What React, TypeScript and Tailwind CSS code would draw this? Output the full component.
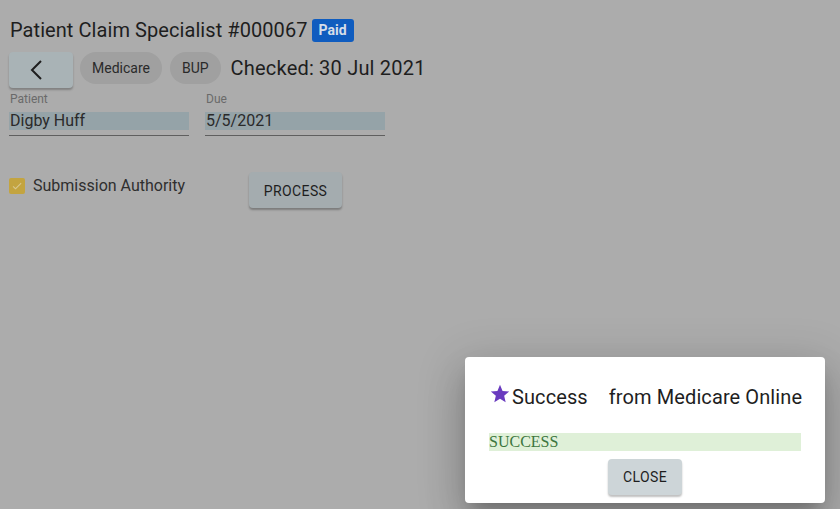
import React from 'react';

const font = { fontFamily: 'Roboto, "Noto Sans", sans-serif' };

function ChevronLeft() {
  return (
    <svg width="14" height="22" viewBox="0 0 14 22" className="text-[#1e1e1e] -ml-[10px]">
      <path d="M12 2 3 11l9 9" fill="none" stroke="currentColor" strokeWidth="2" />
    </svg>
  );
}

function Star() {
  return (
    <svg width="22" height="22" viewBox="0 0 24 24" className="text-[#6a3bbf] -mt-[6px] shrink-0">
      <path d="M12 17.27 18.18 21l-1.64-7.03L22 9.24l-7.19-.61L12 2 9.19 8.63 2 9.24l5.46 4.73L5.82 21z" fill="currentColor" />
    </svg>
  );
}

export default function App() {
  return (
    <div className="relative w-[840px] h-[509px] overflow-hidden bg-[#acacac] text-[#1f1f1f]" style={font}>
      <div className="px-[9px] pt-[16px]">
        <div className="flex items-center gap-[4px] h-[28px]">
          <h1 className="text-[20px] leading-[28px] pl-[1px] tracking-[0.07px] text-[#1e1e1e]">Patient Claim Specialist #000067</h1>
          <span className="h-[23px] px-[7px] rounded-[3px] bg-[#0f5cbf] text-[#d6dde8] text-[14px] font-bold leading-[23px]">Paid</span>
        </div>
        <div className="flex items-center mt-[8px] h-[36px]">
          <button className="w-[64px] h-[36px] rounded-[4px] bg-[#a9b3b6] shadow-[0_2px_2px_rgba(0,0,0,0.25)] flex items-center justify-center">
            <ChevronLeft />
          </button>
          <span className="ml-[7px] h-[32px] px-[12px] rounded-full bg-[#a0a0a0] text-[14px] leading-[32px] text-[#2a2a2a] -mt-[4px]">Medicare</span>
          <span className="ml-[8px] h-[32px] px-[12px] rounded-full bg-[#a0a0a0] text-[14px] leading-[32px] text-[#2a2a2a] -mt-[4px]">BUP</span>
          <span className="ml-[10px] text-[20px] leading-[28px] tracking-[0.2px] text-[#1e1e1e] -mt-[4px]">Checked: 30 Jul 2021</span>
        </div>
        <div className="flex gap-[16px] mt-[3px]">
          {[
            ['Patient', 'Digby Huff'],
            ['Due', '5/5/2021'],
          ].map(([label, value]) => (
            <div key={label} className="w-[180px]">
              <div className="text-[12px] leading-[16px] text-[#6a6a6a] pl-[1px]">{label}</div>
              <div className="mt-[5px] border-b border-[#5f5f5f] pb-[5px]">
                <div className="h-[18px] bg-[#95a3a8] text-[16px] leading-[18px] text-[#2a2a2a] pl-[1px]">{value}</div>
              </div>
            </div>
          ))}
        </div>
        <div className="flex items-start mt-[36px]">
          <label className="flex items-center gap-[8px] mt-[3px]">
            <span className="w-[16px] h-[16px] rounded-[2px] bg-[#c3a440] flex items-center justify-center">
              <svg width="12" height="12" viewBox="0 0 24 24">
                <path d="M9 16.17 4.83 12l-1.42 1.41L9 19 21 7l-1.41-1.41z" fill="#d9c88f" />
              </svg>
            </span>
            <span className="text-[16px] leading-[22px] text-[#2f2f2f]">Submission Authority</span>
          </label>
          <button className="ml-[64px] w-[93px] h-[36px] rounded-[4px] bg-[#a4acaf] shadow-[0_2px_2px_rgba(0,0,0,0.28)] text-[14px] tracking-[0.4px] text-[#1e1e1e] pt-[2px]">
            PROCESS
          </button>
        </div>
      </div>

      <div className="absolute right-[15px] bottom-[6px] w-[360px] bg-white rounded-[4px] shadow-[0_11px_15px_-7px_rgba(0,0,0,0.2),0_24px_38px_3px_rgba(0,0,0,0.14),0_9px_46px_8px_rgba(0,0,0,0.12)] px-[24px] pt-[25px] pb-[8px]">
        <div className="flex items-center h-[30px] text-[20px] tracking-[0.1px] text-[#1e1e1e] whitespace-nowrap">
          <Star />
          <span className="ml-[1px]">Success</span>
          <span className="ml-[21px]">from Medicare Online</span>
        </div>
        <div className="mt-[21px] h-[18px] bg-[#dff0d8] text-[#3c763d] text-[16px] leading-[18px]" style={{ fontFamily: '"Liberation Serif", serif' }}>
          SUCCESS
        </div>
        <div className="flex justify-center mt-[8px]">
          <button className="w-[74px] h-[36px] rounded-[4px] bg-[#cdd5d8] shadow-[0_2px_2px_rgba(0,0,0,0.25)] text-[14px] tracking-[0.4px] text-[#1e1e1e]">
            CLOSE
          </button>
        </div>
      </div>
    </div>
  );
}
